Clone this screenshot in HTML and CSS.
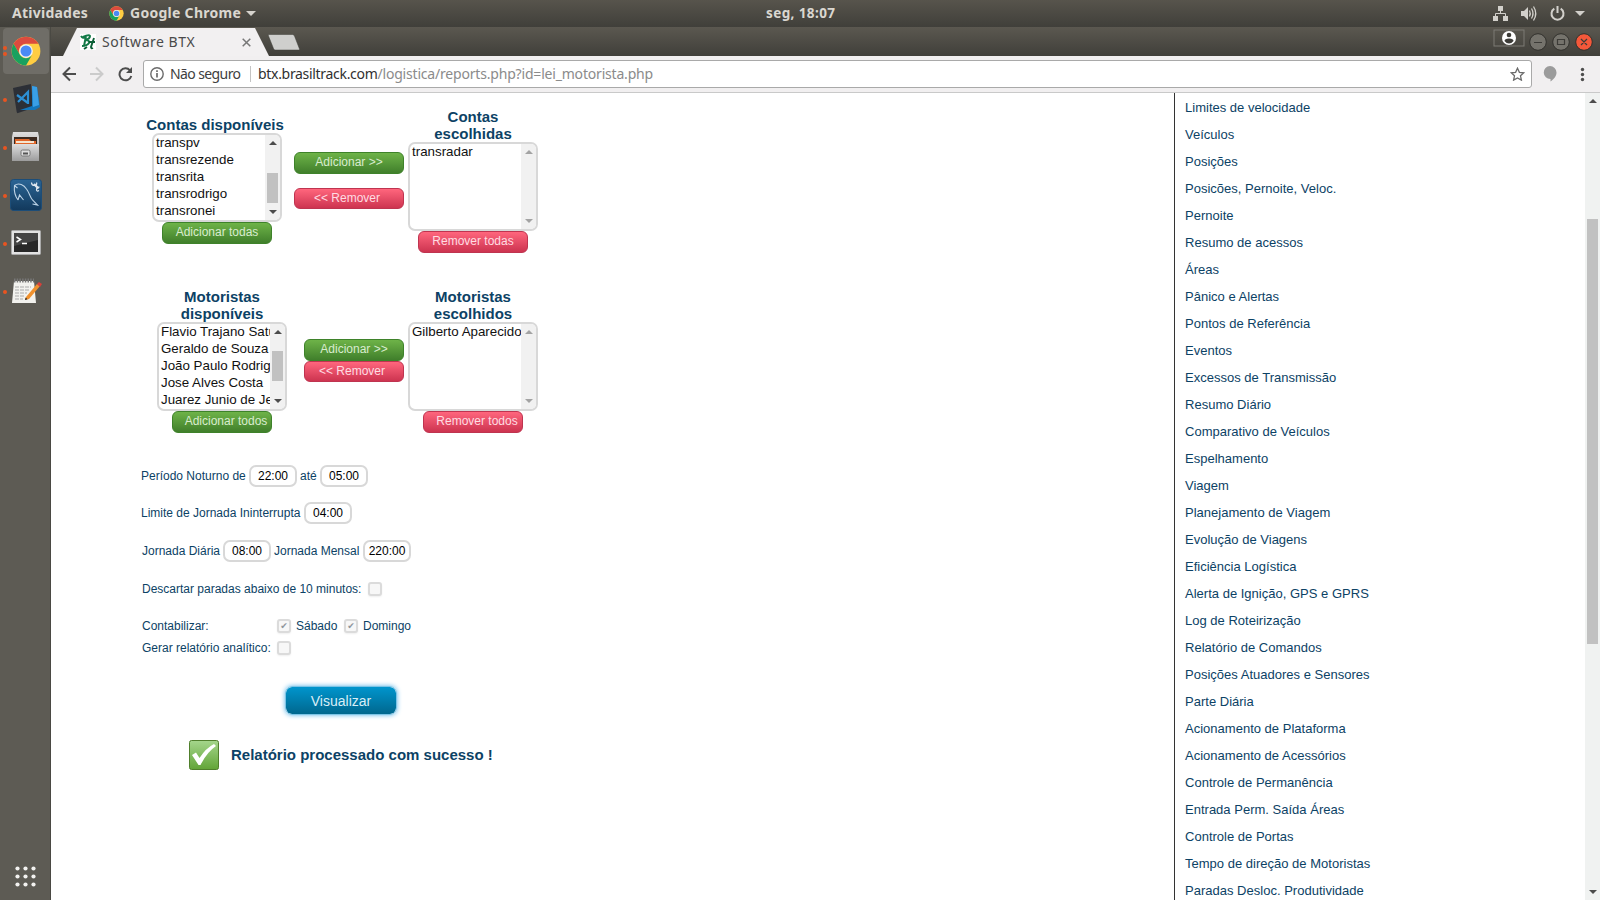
FILE: index.html
```html
<!DOCTYPE html>
<html lang="pt-BR">
<head>
<meta charset="utf-8">
<title>Software BTX</title>
<link rel="stylesheet" href="styles.css">
</head>
<body>
<svg width="0" height="0" class="defs">
  <defs>
    <symbol id="chrome" viewBox="0 0 48 48">
      <circle cx="24" cy="24" r="23" fill="#ffcd42"/>
      <path d="M4.1 12.5A23 23 0 0 1 43.9 12.5H24A11.5 11.5 0 0 0 14 29.7z" fill="#dc4b3e"/>
      <path d="M4.1 12.5 14 29.7A11.5 11.5 0 0 0 33.8 30L24 47A23 23 0 0 1 4.1 12.5z" fill="#1aa15f"/>
      <circle cx="24" cy="24" r="11" fill="#f1f1f1"/>
      <circle cx="24" cy="24" r="8.8" fill="#4a8af4"/>
    </symbol>
    <linearGradient id="metal" x2="0" y2="1"><stop stop-color="#dedede"/><stop offset="1" stop-color="#9c9c9c"/></linearGradient>
    <linearGradient id="blue" x2="0" y2="1"><stop stop-color="#2b6595"/><stop offset="1" stop-color="#12395c"/></linearGradient>
    <linearGradient id="leaf" x2="0" y2="1"><stop stop-color="#a5d68c"/><stop offset="1" stop-color="#62a437"/></linearGradient>
  </defs>
</svg>
<header class="topbar">
  <span class="activities">Atividades</span>
  <svg class="app-icon" width="15" height="15"><use href="#chrome"/></svg>
  <span class="app-name">Google Chrome</span>
  <svg class="caret" width="10" height="5"><path d="M0 0h10L5 5z" fill="#d6d3cd"/></svg>
  <span class="clock">seg, 18:07</span>
  <svg class="tray" width="96" height="18" viewBox="0 0 96 18" fill="#d2d0cb">
    <path d="M5 2h5v5H5zM0 12h5v5H0zM10 12h5v5h-5z"/>
    <path d="M7.500 7v3M2.500 12V9.500h10V12" fill="none" stroke="#d2d0cb"/>
    <path d="M28 7h3l4-4v13l-4-4h-3z"/>
    <path d="M36.500 6.500q1.500 3 0 6M38.500 4.500q3 5 0 10M40.500 2.500q4.500 7 0 14" fill="none" stroke="#d2d0cb" stroke-width="1.300"/>
    <path d="M61.300 4.600a6 6 0 1 0 6.400 0M64.500 2v7" fill="none" stroke="#d2d0cb" stroke-width="2"/>
    <path d="M82 7h10l-5 5z"/>
  </svg>
</header>
<div class="desktop">
  <nav class="dock">
    <div class="launcher active two"><svg width="30" height="30"><use href="#chrome"/></svg></div>
    <div class="launcher"><svg width="30" height="32" viewBox="0 0 30 32">
      <path d="M2 5 20 1l2 24-15 5q-1 .5-1.300-1z" fill="#2c2f36"/>
      <path d="m21 3 5 1 3 20-5 3H9l12-4z" fill="#1377bd"/><path d="m21 3 5 1 2 18-6 2z" fill="#3a9fe6"/>
      <path d="m6 12 11 8M7 19l10-10v12" fill="none" stroke="#2c8fd4" stroke-width="2.200"/>
    </svg></div>
    <div class="launcher"><svg width="30" height="32" viewBox="0 0 30 32">
      <path d="M2 1h25l1 5v24H1V6z" fill="url(#metal)"/><path d="M3 6h23v8H3z" fill="#3c2b21"/>
      <path d="M4 8h14l2 2h5v4H4z" fill="#e0662a"/><path d="M5 10h18v2H5z" fill="#f5e5cf"/>
      <path d="M1 13h27v17H1z" fill="url(#metal)"/>
      <rect x="10" y="19" width="9" height="6" rx="1.500" fill="#ddd" stroke="#777"/><path d="M12 21.500h5v2h-5z" fill="#555"/>
    </svg></div>
    <div class="launcher"><svg width="32" height="32" viewBox="0 0 32 32">
      <rect x=".5" y=".5" width="31" height="31" rx="3" fill="url(#blue)" stroke="#1c4d78"/>
      <path d="M8 21C5 17 4 11 4.500 6.500 9 3 14 6 16.500 10c3 4 3.500 8 6 11l5 5-5-1M8 21l1.500-5 4 5M5 7l2.500 2" fill="none" stroke="#bdd3e6" stroke-width="1.100"/>
      <path d="m24 5 4.500 4.500" fill="none" stroke="#dfe8f0" stroke-width="2.400"/>
      <path d="M21.500 3.500q0 3 3 3t2-3M29.500 8q-3 0-3 2.500t2.500 1" fill="none" stroke="#dfe8f0" stroke-width="1.200"/>
    </svg></div>
    <div class="launcher"><svg width="30" height="26" viewBox="0 0 30 26">
      <rect x=".5" y=".5" width="29" height="24" rx="1" fill="#e3e3e3" stroke="#aaa"/>
      <rect x="3" y="3" width="24" height="19" fill="#282828"/><path d="M3 3h24v7L3 16z" fill="#454545"/>
      <path d="m5.500 7 4 2.500-4 2.500M11 13.500h5" fill="none" stroke="#fff" stroke-width="1.500"/>
    </svg></div>
    <div class="launcher"><svg width="32" height="26" viewBox="0 0 32 26">
      <path d="M4 3h20l2 22H2z" fill="#f2f2ee"/><path d="M4 2.500h20" stroke="#777" stroke-width="4" stroke-dasharray="1.500 1.200"/>
      <path d="M5 9h16M5 12h14M5 15h12M5 18h9M5 21h8" stroke="#aaa" stroke-dasharray="4 1"/>
      <path d="m16 19 11-13 3 2-11 13-4 1z" fill="#f0912d"/><path d="m27 6 2-2 3 2-2 3z" fill="#d9403a"/><path d="m15 22 .7-2.500 1.800 1.700z" fill="#222"/>
    </svg></div>
    <svg class="apps" width="21" height="21" viewBox="0 0 21 21" fill="#f3f2f0">
      <circle cx="2.500" cy="2.500" r="2.100"/><circle cx="10.500" cy="2.500" r="2.100"/><circle cx="18.500" cy="2.500" r="2.100"/>
      <circle cx="2.500" cy="10.500" r="2.100"/><circle cx="10.500" cy="10.500" r="2.100"/><circle cx="18.500" cy="10.500" r="2.100"/>
      <circle cx="2.500" cy="18.500" r="2.100"/><circle cx="10.500" cy="18.500" r="2.100"/><circle cx="18.500" cy="18.500" r="2.100"/>
    </svg>
  </nav>
  <div class="browser">
    <div class="tabstrip">
      <div class="tab">
        <svg class="favicon" width="16" height="16" viewBox="0 0 16 16"><path d="M0 0h16v16H0z" fill="#fff"/>
          <path d="M1 2q2 3 4 1M6 2 4 12M3 3q6-3 7-1 0 3-5 4 5 0 4 3-2 3-7 3" fill="none" stroke="#147a48" stroke-width="2"/>
          <path d="m14 4-3 9q0 2 2 1M9 8h6M7 13l-3 2" fill="none" stroke="#0d6038" stroke-width="1.900"/></svg>
        <span class="tab-title">Software BTX</span>
        <svg class="tab-close" width="9" height="9"><path d="m.7.7 7.600 7.600M8.300.7.700 8.300" stroke="#777" stroke-width="1.500"/></svg>
      </div>
      <svg class="newtab" width="34" height="17"><path d="M1.500.5h24q1.500 0 2 1.500l5 13q.5 1-1 1h-23q-1.500 0-2-1.500l-5-12.500q-.5-1.500 0-1.500z" fill="#cfcfcd" stroke="#3f3e39" stroke-width=".5"/></svg>
      <svg class="window-buttons" width="100" height="24" viewBox="0 0 100 24">
        <rect x="1" y="3" width="30" height="16" fill="none" stroke="#7d7b75"/>
        <circle cx="16" cy="11" r="7" fill="#fff"/><circle cx="16" cy="8" r="2.300" fill="#3c3b37"/><path d="M11.500 14q0-2.500 4.500-2.500t4.500 2.500q-2 2.500-4.500 2.500T11.500 14z" fill="#3c3b37"/>
        <g stroke="#32312d"><circle cx="45" cy="15" r="8.300" fill="#75736c"/><circle cx="68" cy="15" r="8.300" fill="#75736c"/><circle cx="91" cy="15" r="8.300" fill="#f4583a"/></g>
        <path d="M41 15.500h8M64.500 12.500h7v5h-7zM88 12l6 6M94 12l-6 6" fill="none" stroke="#3c3b37" stroke-width="1.200"/>
      </svg>
    </div>
    <div class="toolbar">
      <svg class="nav-icons" width="72" height="16" viewBox="0 0 72 16" fill="none" stroke-width="2">
        <path d="M14 8H1.500M8 1.500 1.500 8 8 14.500" stroke="#4d4d4d"/>
        <path d="M28 8h12.500M34 1.500 40.500 8 34 14.500" stroke="#cbcbcb"/>
        <path d="M68 4.300A6 6 0 1 0 69.300 10" stroke="#4d4d4d"/><path d="M70 1v6h-6z" fill="#4d4d4d"/>
      </svg>
      <div class="omnibox">
        <svg width="14" height="14" fill="none" stroke="#6b6b6b" stroke-width="1.400"><circle cx="7" cy="7" r="6.200"/><path d="M7 6v4.500M7 3.300v1.600" stroke-width="1.700"/></svg>
        <span class="security">Não seguro</span>
        <span class="host">btx.brasiltrack.com</span><span class="path">/logistica/reports.php?id=lei_motorista.php</span>
        <svg class="star" width="15" height="14" viewBox="0 0 15 14"><path d="m7.500 1.200 1.900 4.100 4.300.5-3.200 3 .9 4.300-3.900-2.200-3.900 2.200.9-4.300-3.200-3 4.300-.5z" fill="none" stroke="#6b6b6b" stroke-width="1.300"/></svg>
      </div>
      <svg class="tool-icons" width="48" height="18" viewBox="0 0 48 18"><path d="M7 1a6.500 6.500 0 0 1 6.500 6.500c0 4-3 7-6 9V14A6.500 6.500 0 0 1 7 1z" fill="#9b9b9b"/>
        <g fill="#4d4d4d"><circle cx="39.500" cy="4.500" r="1.700"/><circle cx="39.500" cy="9.500" r="1.700"/><circle cx="39.500" cy="14.500" r="1.700"/></g></svg>
    </div>
    <div class="page">
      <main class="report">
        <section class="picker accounts">
          <div class="side available">
            <h3>Contas disponíveis</h3>
            <div class="list"><ul><li>transpv</li><li>transrezende</li><li>transrita</li><li>transrodrigo</li><li>transronei</li></ul>
              <div class="bar"><i class="up"></i><i class="thumb low"></i><i class="down"></i></div></div>
            <button class="btn green">Adicionar todas</button>
          </div>
          <div class="moves"><button class="btn green">Adicionar &gt;&gt;</button><button class="btn red short">&lt;&lt; Remover</button></div>
          <div class="side chosen">
            <h3>Contas<br>escolhidas</h3>
            <div class="list"><ul><li>transradar</li></ul><div class="bar off"><i class="up"></i><i class="down"></i></div></div>
            <button class="btn red">Remover todas</button>
          </div>
        </section>
        <section class="picker drivers">
          <div class="side available">
            <h3>Motoristas<br>disponíveis</h3>
            <div class="list"><ul><li>Flavio Trajano Satu</li><li>Geraldo de Souza</li><li>João Paulo Rodrig</li><li>Jose Alves Costa</li><li>Juarez Junio de Je</li></ul>
              <div class="bar"><i class="up"></i><i class="thumb mid"></i><i class="down"></i></div></div>
            <button class="btn green">Adicionar todos</button>
          </div>
          <div class="moves"><button class="btn green">Adicionar &gt;&gt;</button><button class="btn red short">&lt;&lt; Remover</button></div>
          <div class="side chosen">
            <h3>Motoristas<br>escolhidos</h3>
            <div class="list"><ul><li>Gilberto Aparecido</li></ul><div class="bar off"><i class="up"></i><i class="down"></i></div></div>
            <button class="btn red">Remover todos</button>
          </div>
        </section>
        <div class="field night"><label class="l-night">Período Noturno de</label><input value="22:00"><label class="l-until">até</label><input value="05:00"></div>
        <div class="field limit"><label class="l-limit">Limite de Jornada Ininterrupta</label><input value="04:00"></div>
        <div class="field hours"><label class="l-daily">Jornada Diária</label><input value="08:00"><label class="l-month">Jornada Mensal</label><input value="220:00"></div>
        <div class="field discard"><label class="l-discard">Descartar paradas abaixo de 10 minutos:</label><span class="check"></span></div>
        <div class="field count"><label class="l-count">Contabilizar:</label><span class="check">✔</span><label class="l-sat">Sábado</label><span class="check">✔</span><label class="l-sun">Domingo</label></div>
        <div class="field detail"><label class="l-count">Gerar relatório analítico:</label><span class="check"></span></div>
        <button class="view">Visualizar</button>
        <div class="success">
          <svg width="30" height="30" viewBox="0 0 30 30"><rect x=".5" y=".5" width="29" height="29" rx="2" fill="url(#leaf)" stroke="#507f2c"/><path d="m3 15 4-2.500 3.500 5.500Q17 8 25 4l2 2Q18 12 11.500 25H9.500z" fill="#fff"/></svg>
          <strong>Relatório processado com sucesso !</strong>
        </div>
      </main>
      <aside class="menu">
        <a>Limites de velocidade</a><a>Veículos</a><a>Posições</a><a>Posicões, Pernoite, Veloc.</a><a>Pernoite</a><a>Resumo de acessos</a><a>Áreas</a><a>Pânico e Alertas</a><a>Pontos de Referência</a><a>Eventos</a><a>Excessos de Transmissão</a><a>Resumo Diário</a><a>Comparativo de Veículos</a><a>Espelhamento</a><a>Viagem</a><a>Planejamento de Viagem</a><a>Evolução de Viagens</a><a>Eficiência Logística</a><a>Alerta de Ignição, GPS e GPRS</a><a>Log de Roteirização</a><a>Relatório de Comandos</a><a>Posições Atuadores e Sensores</a><a>Parte Diária</a><a>Acionamento de Plataforma</a><a>Acionamento de Acessórios</a><a>Controle de Permanência</a><a>Entrada Perm. Saída Áreas</a><a>Controle de Portas</a><a>Tempo de direção de Motoristas</a><a>Paradas Desloc. Produtividade</a>
      </aside>
      <div class="bar page-bar"><i class="up"></i><i class="thumb"></i><i class="down"></i></div>
    </div>
  </div>
</div>
</body>
</html>
```
FILE: styles.css
```css
* { box-sizing: border-box; }
body { margin: 0; width: 1600px; height: 900px; overflow: hidden; background: #fff; font-family: "Liberation Sans", Arial, sans-serif; }
.defs { position: absolute; }
svg { display: block; flex: none; }

/* Desktop panel */
.topbar { position: relative; display: flex; align-items: center; height: 27px; padding-left: 12px; background: linear-gradient(#57544c, #403f3a); color: #dad7d0; font: bold 14px/26px "Noto Sans", sans-serif; white-space: nowrap; }
.activities { width: 97px; letter-spacing: .25px; }
.app-name { margin-left: 6px; width: 111px; letter-spacing: .28px; }
.caret { margin-left: 5px; }
.clock { width: 511px; margin-left: 510px; font-size: 13.5px; letter-spacing: .4px; }
.topbar span { margin-top: -1px; }
.tray { position: absolute; right: 11px; top: 4px; }

.desktop { display: flex; height: 873px; }
.dock { width: 51px; flex: none; display: flex; flex-direction: column; align-items: center; background: #5d5b54; border-right: 1px solid #4a4943; padding: 1px 0 0 1px; }
.launcher { position: relative; width: 46px; height: 46px; margin-bottom: 2px; border-radius: 4px; display: flex; align-items: center; justify-content: center; }
.launcher.active { background: #6f6d67; }
.launcher::before { content: ""; position: absolute; left: 0; top: 22px; width: 4px; height: 4px; border-radius: 50%; background: #e95420; }
.launcher.two::before { top: 18px; box-shadow: 0 6px #e95420; }
.apps { margin: auto 0 13px; }

/* Browser chrome */
.browser { flex: 1; display: flex; flex-direction: column; min-width: 0; }
.tabstrip { display: flex; height: 29px; flex: none; background: linear-gradient(#5b5850, #403f3a); }
.tab { display: flex; align-items: center; width: 206px; height: 28px; margin: 1px 0 0 12px; padding-left: 17px; background: #f2f0f1; clip-path: polygon(14px 0, 192px 0, 206px 100%, 0 100%); }
.tab-title { margin-left: 6px; width: 140px; font: 14px/24px "Noto Sans", sans-serif; letter-spacing: .52px; color: #4a4a4a; white-space: nowrap; }
.newtab { margin: 7px 0 0 -2px; }
.window-buttons { margin: 0 7px 0 auto; }
.toolbar { display: flex; align-items: center; height: 37px; flex: none; background: #f1eff0; border-bottom: 1px solid #c9c9c9; }
.nav-icons { margin-left: 11px; }
.omnibox { display: flex; align-items: center; width: 1389px; height: 28px; margin: 0 0 1px 9px; padding: 0 6px; border: 1px solid #a9a9a9; border-radius: 3px; background: #fff; font: 14px/26px "Noto Sans", sans-serif; white-space: nowrap; }
.security { margin-left: 6px; width: 81px; color: #404040; border-right: 1px solid #c4c4c4; line-height: 16px; letter-spacing: -.6px; }
.host { margin-left: 7px; color: #303030; letter-spacing: -.31px; }
.path { color: #8b8b8b; letter-spacing: -.19px; }
.star { margin-left: auto; }
.tool-icons { margin-left: 11px; }

/* Report page */
.page { display: flex; height: 807px; color: #0c4265; }
.report { width: 1123px; padding-left: 90px; }
.picker { display: flex; }
.side { display: flex; flex-direction: column; align-items: center; }
h3 { margin: 0; font-size: 15px; line-height: 17px; text-align: center; white-space: nowrap; }
.accounts { height: 191px; padding-top: 15px; }
.drivers { height: 181px; padding-top: 4px; }
.accounts .available { padding: 8px 0 0 4px; width: 148px; }
.accounts .available h3 { margin-left: -4px; }
.drivers .available { padding-left: 16px; width: 146px; }
.accounts .moves { margin-left: 5px; padding-top: 44px; gap: 14px; }
.drivers .moves { margin-left: 17px; padding-top: 51px; }
.chosen { margin-left: 4px; }
.moves { display: flex; flex-direction: column; }
.list { display: flex; width: 130px; height: 89px; border: 2px solid #d8d8d8; border-radius: 7px; overflow: hidden; background: #fff; }
ul { flex: 1; min-width: 0; margin: -1px 0 0; padding: 0 0 0 2px; list-style: none; overflow: hidden; white-space: nowrap; font-size: 13.333px; color: #111; }
li { height: 17px; line-height: 17px; }
.bar { position: relative; width: 15px; flex: none; background: #f1f1f1; }
.bar i { position: absolute; left: 4px; border: solid transparent; border-width: 0 4px; }
.bar .up { top: 6px; border-bottom: 4px solid #4c4c4c; }
.bar .down { bottom: 6px; border-top: 4px solid #4c4c4c; }
.bar.off .up { border-bottom-color: #a3a3a3; }
.bar.off .down { border-top-color: #a3a3a3; }
.bar .thumb { left: 2px; width: 11px; height: 30px; border: 0; background: #c1c1c1; }
.bar .low { top: 38px; }
.bar .mid { top: 27px; }
.btn { width: 110px; height: 22px; padding: 0 0 3px; border: 1px solid; border-radius: 6px; font: 12px/16px "Liberation Sans", sans-serif; white-space: nowrap; }
.drivers .btn { width: 100px; }
.green { border-color: #3e822a; background: linear-gradient(#6eb348, #407f2b); color: #d9ecce; }
.red { border-color: #bf3450; background: linear-gradient(#ff667d, #cd3450); color: #ffdce2; }
.short { height: 21px; padding: 0 4px 1px 0; }
.drivers .side .btn { padding-left: 8px; }

.field { display: flex; align-items: center; height: 22px; font-size: 12px; white-space: nowrap; }
.field input { width: 48px; height: 22px; padding: 0; border: 2px solid #d8d8d8; border-radius: 7px; font: 12px "Liberation Sans", sans-serif; color: #000; text-align: center; }
.limit { margin-top: 15px; }
.hours, .discard { margin-top: 16px; }
.hours, .discard, .count, .detail { padding-left: 1px; }
.count { margin-top: 15px; }
.l-night { width: 108px; }
.l-until { width: 23px; padding-left: 3px; }
.l-limit { width: 163px; }
.l-daily { width: 81px; }
.l-month { width: 92px; padding-left: 3px; }
.l-discard { width: 226px; }
.l-count { width: 135px; }
.l-sat { width: 53px; padding-left: 5px; }
.l-sun { padding-left: 5px; }
.check { width: 14px; height: 14px; border: 2px solid #dbdbdb; border-radius: 3px; background: #f7f7f7; box-shadow: 0 1px 2px #0001; font: 9px/10px "DejaVu Sans", sans-serif; color: #8e959c; text-align: center; }
.view { display: block; width: 112px; height: 29px; margin: 27px 0 0 144px; padding: 1px 0 0; border: 1px solid #7cc4e6; border-radius: 7px; background: linear-gradient(#0095cd, #00678e) padding-box; box-shadow: 0 0 5px #59b4e8; color: #d9eef7; font: 14px "Liberation Sans", sans-serif; }
.success { display: flex; align-items: center; gap: 12px; margin: 25px 0 0 48px; font-size: 15px; }
.success strong { margin-top: -1px; }

.menu { display: flex; flex-direction: column; width: 411px; padding-left: 10px; border-left: 1px solid #333; overflow: hidden; }
.menu a { flex: none; height: 27px; line-height: 29px; font-size: 13px; letter-spacing: .01px; white-space: nowrap; }
.page-bar { background: #f0f2f1; }
.page-bar .thumb { top: 126px; height: 425px; }
```
